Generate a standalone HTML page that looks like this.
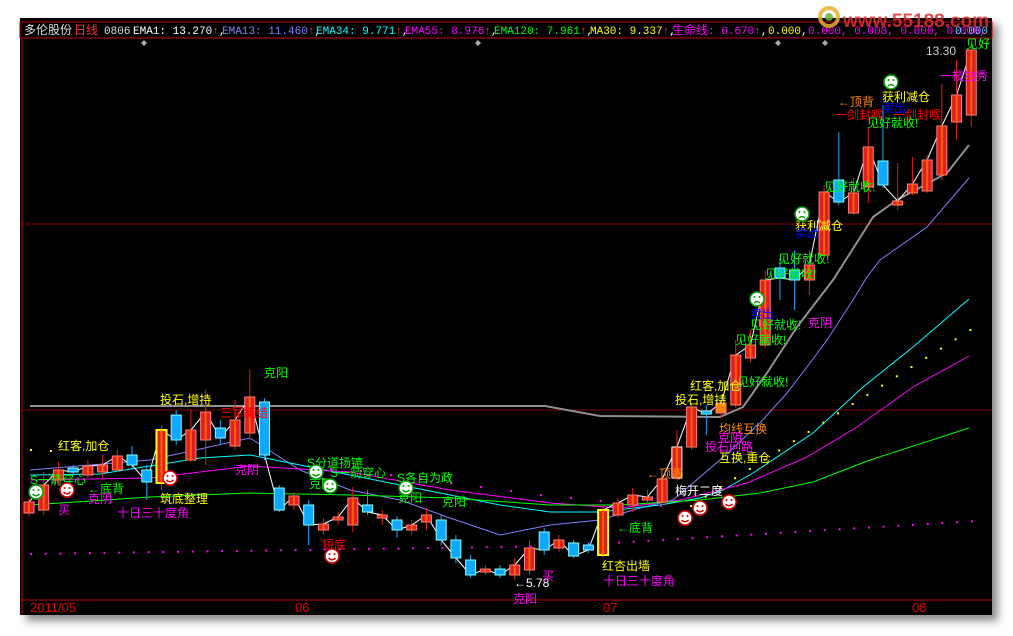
<!DOCTYPE html>
<html><head><meta charset="utf-8">
<style>
html,body{margin:0;padding:0;background:#fff;}
body{width:1013px;height:636px;position:relative;overflow:hidden;font-family:"Liberation Sans","Noto Sans CJK SC",sans-serif;}
#chart{position:absolute;left:20px;top:18px;width:972px;height:597px;background:#000;box-shadow:6px 6px 8px rgba(0,0,0,0.45);}
svg{position:absolute;left:0;top:0;}
.t{font-family:"Liberation Sans","Noto Sans CJK SC",sans-serif;font-size:12px;}
.h{font-family:"Liberation Mono","Noto Sans CJK SC",monospace;font-size:11px;}
</style></head><body>
<div id="chart"></div>
<svg width="1013" height="636" id="s" xmlns="http://www.w3.org/2000/svg">
<rect x="20" y="22" width="972" height="16" fill="none" stroke="#c00000" stroke-width="1"/>
<line x1="22" y1="38" x2="22" y2="615" stroke="#c00000"/>
<line x1="20" y1="224" x2="992" y2="224" stroke="#800000"/>
<line x1="20" y1="410" x2="992" y2="410" stroke="#800000"/>
<line x1="20" y1="600" x2="992" y2="600" stroke="#c00000"/>
<g class="h">
<text x="24" y="34" fill="#ddd" class="t">多伦股份</text>
<text x="74" y="34" fill="#ff3030" class="t">日线</text>
<text x="104" y="34" fill="#ddd">0806</text>
<text x="133" y="34" fill="#fff">EMA1: 13.270<tspan fill="#f33">↑</tspan>,</text>
<text x="222" y="34" fill="#8080ff">EMA13: 11.460<tspan fill="#f33">↑</tspan><tspan fill="#fff">,</tspan></text>
<text x="316" y="34" fill="#00ffff">EMA34: 9.771<tspan fill="#f33">↑</tspan><tspan fill="#fff">,</tspan></text>
<text x="405" y="34" fill="#ff00ff">EMA55: 8.976<tspan fill="#f33">↑</tspan><tspan fill="#fff">,</tspan></text>
<text x="494" y="34" fill="#00ff00">EMA120: 7.961<tspan fill="#f33">↑</tspan><tspan fill="#fff">,</tspan></text>
<text x="590" y="34" fill="#ffff00">MA30: 9.337<tspan fill="#f33">↑</tspan><tspan fill="#fff">,</tspan></text>
<text x="672" y="34" fill="#ff00ff"><tspan class="t">生命线</tspan>: 6.670<tspan fill="#f33">↑</tspan><tspan fill="#fff">,</tspan></text>
<text x="768" y="34" fill="#ffff00">0.000<tspan fill="#fff">,</tspan></text>
<text x="808" y="34" fill="#ff00ff">0.000, 0.000, 0.000, 0.000,</text>
<text x="955" y="34" fill="#80c0ff">0.000</text>
</g>
<g fill="#aaa"><path d="M144 40l3 3-3 3-3-3z"/><path d="M478 40l3 3-3 3-3-3z"/><path d="M778 40l3 3-3 3-3-3z"/><path d="M825 40l3 3-3 3-3-3z"/></g>
<g opacity="0.85">
<circle cx="829" cy="17" r="9" fill="none" stroke="#e8b030" stroke-width="4"/>
<circle cx="829" cy="17" r="4" fill="#6fb040"/>
<text x="843" y="27" font-family="Liberation Sans" font-weight="bold" font-size="19" fill="#e03030">www.55188.com</text>
</g>
<g id="lines" fill="none" stroke-width="1"></g>
<g id="cand"></g>
<g class="t">
<text x="926" y="55" fill="#ccc">13.30</text>
<text x="966" y="48" fill="#0f0">见好</text>
<text x="940" y="80" fill="#f0f">一枝独秀</text>
<text x="882" y="101" fill="#ff0">获利减仓</text>
<text x="838" y="106" fill="#f80">←顶背</text>
<text x="882" y="112" fill="#00f">卖出</text>
<text x="835" y="119" fill="#f00">一剑封喉</text>
<text x="893" y="119" fill="#f00">一剑封喉</text>
<text x="867" y="127" fill="#0f0">见好就收!</text>
<text x="824" y="191" fill="#0f0">见好就收!</text>
<text x="795" y="230" fill="#ff0">获利减仓</text>
<text x="795" y="237" fill="#00f">卖出</text>
<text x="778" y="263" fill="#0f0">见好就收!</text>
<text x="765" y="278" fill="#0f0">见好就收!</text>
<text x="750" y="318" fill="#00f">卖出</text>
<text x="750" y="329" fill="#0f0">见好就收!</text>
<text x="808" y="327" fill="#f0f">克阴</text>
<text x="735" y="344" fill="#0f0">见好就收!</text>
<text x="737" y="386" fill="#0f0">见好就收!</text>
<text x="690" y="390" fill="#ff0">红客,加仓</text>
<text x="675" y="404" fill="#ff0">投石,增持</text>
<text x="719" y="433" fill="#f80">均线互换</text>
<text x="718" y="442" fill="#f0f">克阴</text>
<text x="705" y="451" fill="#f0f">投石问路</text>
<text x="719" y="462" fill="#ff0">互换,重仓</text>
<text x="647" y="478" fill="#f80">←顶背</text>
<text x="675" y="495" fill="#fff">梅开二度</text>
<text x="617" y="532" fill="#0f0">←底背</text>
<text x="602" y="570" fill="#ff0">红杏出墙</text>
<text x="603" y="585" fill="#f0f">十日三十度角</text>
<text x="514" y="587" fill="#fff">←5.78</text>
<text x="542" y="580" fill="#f0f">买</text>
<text x="513" y="603" fill="#f0f">克阳</text>
<text x="264" y="377" fill="#0f0">克阳</text>
<text x="160" y="404" fill="#ff0">投石,增持</text>
<text x="220" y="417" fill="#f00">三军集结</text>
<text x="58" y="450" fill="#ff0">红客,加仓</text>
<text x="30" y="484" fill="#0f0">S一箭穿心</text>
<text x="88" y="493" fill="#0f0">←底背</text>
<text x="88" y="503" fill="#f0f">克阴</text>
<text x="58" y="514" fill="#f0f">买</text>
<text x="117" y="517" fill="#f0f">十日三十度角</text>
<text x="160" y="503" fill="#ff0">筑底整理</text>
<text x="235" y="474" fill="#f0f">克阴</text>
<text x="307" y="467" fill="#0f0">S分道扬镳</text>
<text x="330" y="477" fill="#0f0">S一箭穿心</text>
<text x="309" y="488" fill="#0f0">克阳</text>
<text x="397" y="482" fill="#0f0">S各自为政</text>
<text x="398" y="502" fill="#0f0">克阳</text>
<text x="442" y="506" fill="#0f0">克阳</text>
<text x="322" y="549" fill="#f00">短底</text>
<text x="30" y="612" fill="#e00000" font-size="13">2011/05</text>
<text x="295" y="612" fill="#e00000" font-size="13">06</text>
<text x="603" y="612" fill="#e00000" font-size="13">07</text>
<text x="912" y="612" fill="#e00000" font-size="13">08</text>
</g>
<g id="smile"></g>
</svg>
<script>
var NS="http://www.w3.org/2000/svg";
function el(p,n,a){var e=document.createElementNS(NS,n);for(var k in a)e.setAttribute(k,a[k]);p.appendChild(e);return e;}
var D=[[502,513,498,516,'r'],[485,510,472,515,'r'],[470,480,462,485,'r'],[468,472,465,475,'c'],[466,475,460,478,'r'],[465,472,455,478,'r'],[456,470,450,472,'r'],[455,465,446,470,'c'],[470,482,465,500,'c'],[430,483,425,490,'y'],[415,440,410,445,'c'],[430,460,410,462,'r'],[412,440,390,465,'r'],[428,438,420,445,'c'],[420,446,400,450,'r'],[397,433,370,440,'r'],[402,455,398,460,'c'],[488,510,485,512,'c'],[496,505,492,510,'r'],[505,525,500,545,'c'],[524,530,518,535,'r'],[517,520,512,525,'r'],[498,525,487,532,'r'],[505,512,490,515,'c'],[515,518,510,525,'r'],[520,530,516,538,'c'],[525,530,520,535,'r'],[515,522,508,530,'r'],[520,540,515,545,'c'],[540,558,535,563,'c'],[560,575,555,578,'c'],[569,572,565,575,'r'],[569,575,565,578,'c'],[565,575,558,580,'r'],[548,570,540,575,'r'],[532,550,528,555,'c'],[540,548,535,552,'r'],[543,556,540,558,'c'],[545,550,542,553,'c'],[510,555,505,558,'y'],[503,515,498,518,'r'],[495,505,488,512,'r'],[497,500,490,505,'r'],[479,502,475,505,'r'],[447,478,430,480,'w'],[407,447,403,450,'r'],[411,414,405,435,'c'],[403,413,400,418,'o'],[355,405,340,408,'r'],[345,358,330,362,'r'],[280,345,270,348,'r'],[268,278,258,300,'c'],[270,280,250,310,'c'],[265,280,250,295,'r'],[192,255,185,258,'r'],[180,202,132,205,'c'],[193,213,178,215,'r'],[147,187,127,203,'r'],[161,185,105,188,'c'],[201,205,163,210,'r'],[184,193,157,195,'r'],[160,191,155,193,'r'],[126,175,84,180,'r'],[95,122,60,140,'r'],[50,115,45,127,'r']];
var L=document.getElementById('lines'),C=document.getElementById('cand');
function pl(pts,col,w){el(L,'polyline',{points:pts.map(function(p){return p.join(',')}).join(' '),stroke:col,'stroke-width':w||1,fill:'none'});}
pl([[30,406],[545,406],[600,416],[720,417],[743,407],[767,373],[797,327],[833,280],[863,233],[873,217],[897,200],[947,173],[969,145]],'#909090',2);
pl([[30,470],[150,460],[250,438],[300,470],[350,490],[400,500],[450,518],[500,535],[550,525],[600,520],[640,508],[673,500],[720,460],[760,423],[787,393],[810,363],[827,340],[853,300],[867,277],[880,260],[927,227],[969,178]],'#8080ff');
pl([[30,475],[100,474],[200,458],[250,455],[300,465],[400,485],[500,505],[550,512],[600,512],[660,505],[700,498],[723,490],[753,473],[813,433],[863,387],[913,347],[969,299]],'#00ffff');
pl([[30,480],[150,478],[250,466],[350,472],[450,490],[550,503],[620,508],[680,500],[747,483],[807,457],[857,427],[913,387],[969,356]],'#ff00ff');
pl([[30,505],[150,497],[250,493],[350,495],[450,498],[550,505],[620,505],[700,500],[760,493],[813,482],[870,460],[969,428]],'#00ff00');
var cl=[];
D.forEach(function(d,i){var x=i<40?29+i*14.72:618+(i-40)*14.72;d.x=x;var red=d[4]!='c';cl.push([x,red?d[0]:d[1]]);});
pl(cl,'#ffffff');
for(var x=30;x<975;x+=14.7){var y=x<560?553-(x-30)*0.015:545-(x-560)*0.06;el(L,'rect',{x:x,y:y,width:2,height:2,fill:'#ff00ff'});}
for(var x=690;x<975;x+=14.7){var y=505-(x-690)*0.63;el(L,'rect',{x:x,y:y,width:2,height:2,fill:'#ffff00'});}
[[30,449],[50,450],[330,468],[360,470],[390,474],[420,478],[450,482],[480,486],[510,490],[540,494],[570,497],[600,500],[630,503],[660,505]].forEach(function(p){el(L,'rect',{x:p[0],y:p[1],width:2,height:2,fill:p[0]>300?'#ff00ff':'#ffff00'});});
D.forEach(function(d){var x=d.x,t=d[4];var body=t=='c'?'#10a8ff':(t=='o'?'#ff8000':'#e02020');var edge=t=='c'?'#80ffff':(t=='y'?'#ffff00':(t=='w'?'#ffffff':'#ff8080'));var wick=t=='c'?'#10a8ff':'#e02020';
el(C,'line',{x1:x,y1:d[2],x2:x,y2:d[3],stroke:wick});
el(C,'rect',{x:x-5,y:d[0],width:10,height:Math.max(2,d[1]-d[0]),fill:body,stroke:edge,'stroke-width':t=='y'?2:1});
if(t=='r'||t=='y'||t=='w')el(C,'line',{x1:x,y1:d[0],x2:x,y2:d[1],stroke:'#ff6000','stroke-width':2});});
var S=document.getElementById('smile');
function sm(x,y,c,sad){el(S,'circle',{cx:x,cy:y,r:7,fill:'#fff',stroke:c,'stroke-width':1.5});el(S,'circle',{cx:x-2.5,cy:y-2,r:1,fill:c});el(S,'circle',{cx:x+2.5,cy:y-2,r:1,fill:c});el(S,'path',{d:sad?'M'+(x-3)+' '+(y+4)+'q3 -3 6 0':'M'+(x-3.5)+' '+(y+2)+'q3.5 3.5 7 0',fill:'none',stroke:c,'stroke-width':1.5});}
sm(891,82,'#00a000',1);sm(802,214,'#00a000',1);sm(757,299,'#00a000',1);
sm(685,518,'#e00000');sm(700,508,'#e00000');sm(729,502,'#e00000');
sm(332,556,'#e00000');sm(36,492,'#00a000');sm(67,490,'#e00000');sm(170,478,'#e00000');sm(316,472,'#00a000');sm(330,486,'#00a000');sm(406,488,'#00a000');
</script>
</body></html>
